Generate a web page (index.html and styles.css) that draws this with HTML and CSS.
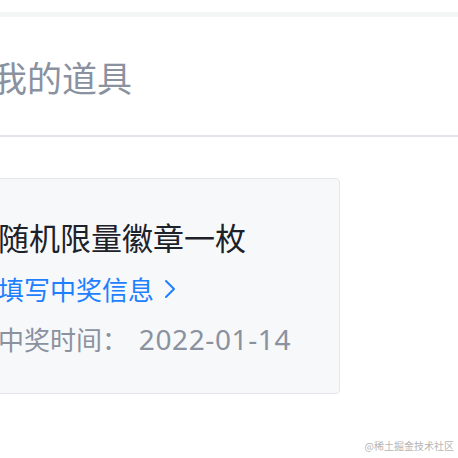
FILE: index.html
```html
<!DOCTYPE html>
<html lang="zh-CN">

<head>
    <meta charset="UTF-8">
    <meta name="viewport" content="width=device-width, initial-scale=1.0">
    <title>我的道具</title>
    <link rel="stylesheet" href="styles.css">
</head>

<body>
    <div class="page">
        <div class="band"></div>
        <div class="box">
            <div class="box_title">我的道具</div>
            <div class="box_body">
                <div class="prize">
                    <div class="prize_name">随机限量徽章一枚</div>
                    <a href="javascript:;" class="prize_link">填写中奖信息
                        <svg class="arrow" width="12" height="20" viewBox="0 0 12 20">
                            <path d="M2 2 L10 10 L2 18" fill="none" stroke="#1e80ff" stroke-width="2" stroke-linecap="round" stroke-linejoin="round" />
                        </svg>
                    </a>
                    <div class="prize_time">
                        <span>中奖时间：</span>
                        <span class="date">2022-01-14</span>
                    </div>
                </div>
            </div>
        </div>
        <div class="mark">@稀土掘金技术社区</div>
    </div>
</body>

</html>
```

FILE: styles.css
```css
* {
    margin: 0;
    padding: 0;
    box-sizing: border-box;
}

body {
    background: #fff;
    font-family: "Noto Sans CJK SC", "Noto Sans", sans-serif;
    overflow: hidden;
}

body a {
    text-decoration: none;
}

.page {
    width: 458px;
    height: 458px;
    padding-top: 12px;
    position: relative;
    overflow: hidden;
}

.band {
    height: 5px;
    background: #f4f5f5;
}

.box_title {
    height: 120px;
    line-height: 120px;
    margin-left: -8px;
    font-size: 35px;
    color: #8a919f;
    border-bottom: 2px solid #e4e6eb;
}

.box_body {
    padding-top: 41px;
}

.prize {
    width: 360px;
    height: 216px;
    margin-left: -20px;
    padding: 38px 0 0 17px;
    background: #f7f8fa;
    border: 1px solid #e4e6eb;
    border-radius: 4px;
}

.prize_name {
    font-size: 31px;
    line-height: 40px;
    color: #1d2129;
}

.prize_link {
    display: flex;
    align-items: center;
    gap: 10px;
    margin-top: 12px;
    font-size: 26px;
    line-height: 40px;
    color: #1e80ff;
}

.prize_time {
    margin-top: 10px;
    font-size: 26px;
    line-height: 40px;
    color: #8a919f;
}

.prize_time .date {
    margin-left: 5px;
    font-family: "Noto Sans", sans-serif;
    font-size: 28px;
    letter-spacing: 0.6px;
}

.mark {
    position: absolute;
    right: 4px;
    bottom: 5px;
    font-size: 10px;
    color: #b5b5b5;
}
```
